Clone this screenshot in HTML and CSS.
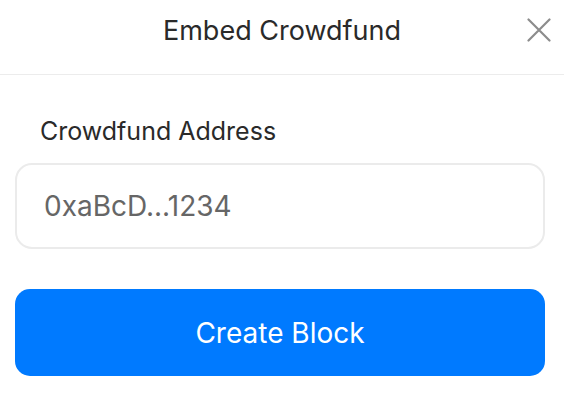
FILE: index.html
```html
<!DOCTYPE html>
<html lang="en">
  <head>
    <meta charset="UTF-8" />
    <meta name="viewport" content="width=device-width, initial-scale=1.0" />
    <title>Embed Crowdfund</title>
    <link rel="stylesheet" href="styles.css">
  </head>
  <body>
    <div class="modal">
      <div class="modal-header">
        <h1 class="title">Embed Crowdfund</h1>
        <button type="button" class="close" aria-label="Close">
          <svg width="24" height="24" viewBox="0 0 24 24">
            <path d="M1.5 1.5L22.5 22.5M22.5 1.5L1.5 22.5" stroke="#8c8c8c" stroke-width="2.2" stroke-linecap="round" fill="none" />
          </svg>
        </button>
      </div>
      <form class="modal-body">
        <label class="field" for="address">Crowdfund Address</label>
        <input type="text" class="input-box" id="address" name="address" placeholder="0xaBcD...1234" />
        <button type="submit" class="create">Create Block</button>
      </form>
    </div>
  </body>
</html>
```

FILE: styles.css
```css
* {
  padding: 0;
  margin: 0;
  box-sizing: border-box;
}
body {
  font-family: Inter, "Liberation Sans", sans-serif;
  background: #fff;
  color: #222;
}
.modal {
  width: 564px;
}
.modal-header {
  position: relative;
  height: 75px;
  border-bottom: 1px solid #ececec;
  display: flex;
  align-items: center;
  justify-content: center;
  padding-bottom: 14px;
}
.title {
  font-size: 27px;
  font-weight: 400;
  color: #2a2a2a;
}
.close {
  position: absolute;
  right: 13px;
  top: 18px;
  border: none;
  background: none;
  width: 24px;
  height: 24px;
}
.modal-body {
  display: flex;
  flex-direction: column;
  padding: 41px 19px 0 15px;
}
.field {
  font-size: 25px;
  line-height: 30px;
  padding-left: 25px;
  color: #2a2a2a;
  margin-bottom: 17px;
}
.input-box {
  height: 86px;
  border: 2px solid #ebebeb;
  border-radius: 17px;
  padding: 0 27px;
  font-family: inherit;
  font-size: 28px;
  color: #222;
  outline: none;
}
.input-box::placeholder {
  color: #666;
}
.create {
  margin-top: 40px;
  height: 87px;
  border: none;
  border-radius: 15px;
  background: #007aff;
  color: #fff;
  font-family: inherit;
  font-size: 28px;
  font-weight: 400;
}
```
